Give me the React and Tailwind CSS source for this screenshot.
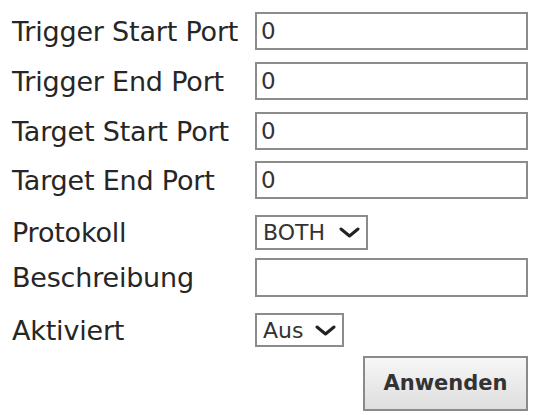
import React from "react";

const Chevron = () => (
  <svg width="21" height="11" viewBox="0 0 21 11" className="shrink-0">
    <polyline
      points="2,2 10.5,9 19,2"
      fill="none"
      stroke="#222"
      strokeWidth="3"
      strokeLinecap="round"
      strokeLinejoin="round"
    />
  </svg>
);

function Row({ label, className = "", children }) {
  return (
    <div className={`flex items-center ${className}`}>
      <div className="w-[243px] shrink-0 text-[27px] leading-none tracking-[-0.2px] text-[#262626]">
        {label}
      </div>
      <div className="flex-1 flex">{children}</div>
    </div>
  );
}

function TextBox({ value = "", h = "h-[38px]" }) {
  return (
    <div
      className={`w-full ${h} border-2 border-[#8c8c8c] bg-white flex items-center pl-[4px] text-[23px] text-[#333]`}
    >
      {value}
    </div>
  );
}

function Select({ value, w, h }) {
  return (
    <div
      className={`${w} ${h} border-2 border-[#8c8c8c] bg-white flex items-center justify-between pl-[6px] pr-[6px] text-[22px] text-[#333]`}
    >
      <span>{value}</span>
      <Chevron />
    </div>
  );
}

export default function App() {
  return (
    <div
      className="w-[534px] h-[415px] bg-white pl-3 pr-[6px] overflow-hidden"
      style={{ fontFamily: '"DejaVu Sans", Verdana, sans-serif' }}
    >
      <Row label="Trigger Start Port" className="mt-3">
        <TextBox value="0" />
      </Row>
      <Row label="Trigger End Port" className="mt-3">
        <TextBox value="0" />
      </Row>
      <Row label="Target Start Port" className="mt-3">
        <TextBox value="0" />
      </Row>
      <Row label="Target End Port" className="mt-[11px]">
        <TextBox value="0" />
      </Row>
      <Row label="Protokoll" className="mt-[16px]">
        <Select value="BOTH" w="w-[113px]" h="h-[35px]" />
      </Row>
      <Row label="Beschreibung" className="mt-[8px]">
        <TextBox h="h-[39px]" />
      </Row>
      <Row label="Aktiviert" className="mt-[16px]">
        <Select value="Aus" w="w-[89px]" h="h-[34px]" />
      </Row>
      <div className="flex justify-end mt-[9px]">
        <button className="w-[165px] h-[55px] border-2 border-[#8a8a8a] bg-gradient-to-b from-[#f7f7f7] to-[#dedede] text-[21px] font-bold text-[#333]">
          Anwenden
        </button>
      </div>
    </div>
  );
}
